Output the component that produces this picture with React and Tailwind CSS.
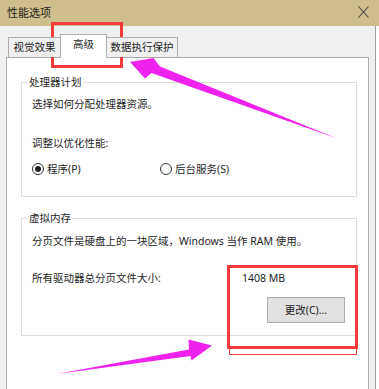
import React from "react";

const font = { fontFamily: '"Noto Sans", "Noto Sans CJK SC", sans-serif' };

function Radio({ checked }) {
  return (
    <span className="w-[12px] h-[12px] rounded-full border border-[#333] bg-white flex items-center justify-center shrink-0">
      {checked && <span className="w-[6px] h-[6px] rounded-full bg-[#222]" />}
    </span>
  );
}

function Group({ title, className, children }) {
  return (
    <div className={"relative border border-[#dcdcdc] ml-[14px] w-[336px] " + className}>
      <span className="absolute -top-[9px] left-[5px] bg-white px-[2px] leading-[16px]">{title}</span>
      {children}
    </div>
  );
}

export default function App() {
  return (
    <div className="relative w-[379px] h-[389px] overflow-hidden bg-white text-[10.5px] text-[#1e1e1e]" style={font}>
      <div className="h-[26px] bg-[#cfbf8c] flex items-center justify-between pl-[7px] pr-[10px]">
        <span className="text-[11px] text-[#222]">性能选项</span>
        <svg width="11" height="12" viewBox="0 0 11 12" className="mb-[3px]">
          <path d="M0.5 0.5 L10.5 11.5 M10.5 0.5 L0.5 11.5" stroke="#444" strokeWidth="1.1" fill="none" />
        </svg>
      </div>
      <div className="w-[376px] h-[363px] bg-[#f0f0f0] border-r border-[#a0a0a0] pl-[6px] pr-[6px] pt-[8px] flex flex-col">
        <div className="flex items-end h-[23px] pl-[2px] relative z-10">
          <div className="w-[53px] h-[20px] border border-[#adadad] border-b-0 bg-[#f0f0f0] flex items-center justify-center text-[#222]">视觉效果</div>
          <div className="w-[47px] h-[24px] -mb-[1px] -ml-[1px] border border-[#adadad] border-b-0 bg-white flex items-center justify-center pb-[3px]">高级</div>
          <div className="w-[72px] h-[20px] -ml-[1px] border border-[#adadad] border-b-0 bg-[#f0f0f0] flex items-center justify-center text-[#222]">数据执行保护</div>
        </div>
        <div className="flex-1 border border-[#adadad] border-b-0 bg-white pt-[24px]">
          <Group title="处理器计划" className="h-[115px]">
            <div className="pl-[10px] pt-[14px] leading-[14px]">
              <div>选择如何分配处理器资源。</div>
              <div className="mt-[25px]">调整以优化性能:</div>
              <div className="mt-[12px] flex items-center">
                <div className="flex items-center gap-[3px] w-[128px]">
                  <Radio checked />
                  <span>程序(P)</span>
                </div>
                <div className="flex items-center gap-[3px]">
                  <Radio />
                  <span>后台服务(S)</span>
                </div>
              </div>
            </div>
          </Group>
          <Group title="虚拟内存" className="h-[118px] mt-[21px]">
            <div className="pl-[10px] pt-[15px] leading-[14px]">
              <div>分页文件是硬盘上的一块区域，Windows 当作 RAM 使用。</div>
              <div className="mt-[23px] flex">
                <span className="w-[210px]">所有驱动器总分页文件大小:</span>
                <span>1408 MB</span>
              </div>
              <div className="flex justify-end pr-[11px] mt-[12px]">
                <div className="w-[78px] h-[26px] border border-[#adadad] bg-[#e1e1e1] flex items-center justify-center text-[#222]">更改(C)...</div>
              </div>
            </div>
          </Group>
        </div>
      </div>
      <svg className="absolute inset-0 pointer-events-none" width="379" height="389" viewBox="0 0 379 389">
        <rect x="52.5" y="23.5" width="69" height="43" fill="none" stroke="#f43a3a" strokeWidth="3" />
        <rect x="228.5" y="266.5" width="128" height="81" fill="none" stroke="#f43a3a" strokeWidth="3" />
        <path d="M229.5 349 L229.5 354.5 L356.5 354.5 L356.5 349" fill="none" stroke="#f43a3a" strokeWidth="1" />
        <polygon points="130,62 153.5,58 160,66.5 337,138.5 151.5,73 145,78.5" fill="#ef22ef" />
        <polygon points="56.5,374 189,349.5 188.5,339.5 212,345.5 191.5,360.5 190.5,356" fill="#ef22ef" />
      </svg>
    </div>
  );
}
